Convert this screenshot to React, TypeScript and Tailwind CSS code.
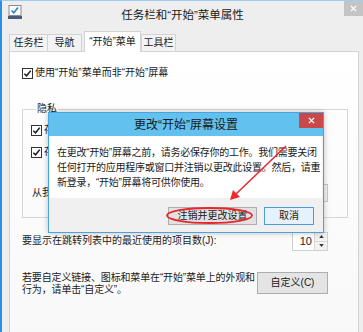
import React from "react";

const font = { fontFamily: '"Liberation Sans", "Noto Sans CJK SC", sans-serif' };

function CheckBox() {
  return (
    <span className="flex h-[11px] w-[11px] shrink-0 items-center justify-center border border-[#333333] bg-white">
      <svg viewBox="0 0 10 10" className="h-[9px] w-[9px]">
        <path d="M1.5 5.2 L4 7.6 L8.6 1.8" stroke="#1a1a1a" strokeWidth="1.7" fill="none" />
      </svg>
    </span>
  );
}

function Tab({ label, active, w }: { label: string; active?: boolean; w: string }) {
  return (
    <div
      className={
        active
          ? `relative z-10 -mb-px flex h-[21px] items-center justify-center border border-b-0 border-[#d3d3d3] bg-white ${w}`
          : `flex h-[17px] items-center justify-center border border-b-0 border-[#d3d3d3] bg-[#f3f3f3] ${w}`
      }
    >
      {label}
    </div>
  );
}

export default function App() {
  return (
    <div
      style={font}
      className="relative h-[332px] w-[363px] overflow-hidden border-l-2 border-t border-l-[#2b8fe6] border-t-[#9fcdef] bg-[#eeeeee] text-[10px] leading-[12px] text-[#1a1a1a]"
    >
      {/* title bar */}
      <div className="relative flex h-[27px] items-center justify-center">
        <svg viewBox="0 0 14 14" className="absolute left-[6px] top-[4px] h-[14px] w-[14px]">
          <rect x="1" y="0.5" width="12" height="10" fill="#ffffff" stroke="#8a8a8a" />
          <path d="M3.5 5.5 L5.8 7.8 L10 2.5" stroke="#2a7fd8" strokeWidth="1.6" fill="none" />
          <rect x="0" y="11" width="14" height="3" fill="#4a5a78" />
        </svg>
        <span className="text-[11.5px]">任务栏和“开始”菜单属性</span>
        <div className="absolute right-[0px] top-[-1px] flex h-[16px] w-[19px] items-center justify-center bg-[#c4c4c4]">
          <svg viewBox="0 0 8 8" className="h-[7px] w-[7px]">
            <path d="M1 1 L7 7 M7 1 L1 7" stroke="#ffffff" strokeWidth="1.5" />
          </svg>
        </div>
      </div>

      {/* tabs */}
      <div className="mt-[3px] flex items-end pl-[7px]">
        <Tab label="任务栏" w="w-[39px]" />
        <Tab label="导航" w="w-[35px] ml-[-1px]" />
        <div className="w-[2px]" />
        <Tab label="“开始”菜单" active w="w-[57px]" />
        <Tab label="工具栏" w="w-[35px]" />
      </div>

      {/* tab panel */}
      <div className="ml-[7px] mr-[4px] h-[300px] border border-[#d3d3d3] bg-gradient-to-b from-white to-[#f8f8f8] pl-[12px] pr-[10px] pt-[15px]">
        <div className="flex h-[12px] items-center gap-[1px]">
          <CheckBox />
          <span className="ml-[1px]">使用“开始”菜单而非“开始”屏幕</span>
        </div>

        <fieldset className="mt-[24px] border border-[#d6d6d6] pb-[15px] pl-[8px] pr-[19px]">
          <legend className="ml-[5px] px-[1px] leading-[12px]">隐私</legend>
          <div className="mt-[9px] flex h-[12px] items-center gap-[2px] whitespace-nowrap">
            <CheckBox />
            <span>存储并显示最近在“开始”菜单中打开的程序</span>
          </div>
          <div className="mt-[10px] flex h-[12px] items-center gap-[2px] whitespace-nowrap">
            <CheckBox />
            <span>存储并显示最近在“开始”菜单和任务栏中打开的项目</span>
          </div>
          <div className="mt-[26px] flex h-[18px] items-center gap-[8px] whitespace-nowrap pl-[1px]">
            <span>从我的“开始”菜单中</span>
            <div className="h-[18px] flex-1 border border-[#c8c8c8] bg-[#f4f4f4]" />
          </div>
        </fieldset>

        <div className="mr-[20px] mt-[14px] flex h-[18px] items-center justify-between">
          <span className="whitespace-nowrap">要显示在跳转列表中的最近使用的项目数(J):</span>
          <div className="flex h-[19px] w-[36px] border border-[#cfcfcf] bg-white">
            <span className="flex flex-1 items-center justify-end pr-[2px] text-[11px]">10</span>
            <div className="flex w-[13px] flex-col border-l border-[#d8d8d8]">
              <div className="flex flex-1 items-center justify-center border-b border-[#d8d8d8] bg-[#f2f2f2]">
                <svg viewBox="0 0 6 4" className="h-[3px] w-[5px]">
                  <path d="M0 4 L3 0 L6 4 Z" fill="#333333" />
                </svg>
              </div>
              <div className="flex flex-1 items-center justify-center bg-[#f2f2f2]">
                <svg viewBox="0 0 6 4" className="h-[3px] w-[5px]">
                  <path d="M0 0 L3 4 L6 0 Z" fill="#333333" />
                </svg>
              </div>
            </div>
          </div>
        </div>

        <div className="mr-[20px] mt-[22px] flex items-start justify-between">
          <div className="whitespace-nowrap leading-[12px] tracking-[-0.15px]">
            <div>若要自定义链接、图标和菜单在“开始”菜单上的外观和</div>
            <div>行为，请单击“自定义”。</div>
          </div>
          <button className="flex h-[22px] w-[71px] shrink-0 items-center justify-center border border-[#adadad] bg-[#e4e4e4]">
            自定义(C)
          </button>
        </div>
      </div>

      {/* modal dialog */}
      <div className="absolute left-[46px] top-[111px] flex h-[121px] w-[276px] flex-col border border-[#4aa3dc] bg-[#f0f0f0] shadow-[0_0_6px_rgba(0,0,0,0.25)]">
        <div className="relative flex h-[23px] items-center justify-center bg-[#62c1ef] text-[12px]">
          更改“开始”屏幕设置
          <div className="absolute right-0 top-0 flex h-[15px] w-[24px] items-center justify-center bg-[#c9484a]">
            <svg viewBox="0 0 8 8" className="h-[7px] w-[7px]">
              <path d="M1 1 L7 7 M7 1 L1 7" stroke="#ffffff" strokeWidth="1.5" />
            </svg>
          </div>
        </div>
        <div className="mx-[1px] h-[62px] whitespace-nowrap bg-white pl-[7px] pt-[9px] leading-[15px] tracking-[-0.25px]">
          <div>在更改“开始”屏幕之前，请务必保存你的工作。我们需要关闭</div>
          <div>任何打开的应用程序或窗口并注销以更改此设置。然后，请重</div>
          <div>新登录，“开始”屏幕将可供你使用。</div>
        </div>
        <div className="flex justify-end gap-[7px] pr-[9px] pt-[9px]">
          <button className="flex h-[18px] w-[89px] items-center justify-center border border-[#adadad] bg-[#e1e1e1]">
            注销并更改设置
          </button>
          <button className="flex h-[18px] w-[50px] items-center justify-center border border-[#4c9be0] bg-[#e5f1fb]">
            取消
          </button>
        </div>
      </div>

      {/* red annotation */}
      <svg className="pointer-events-none absolute left-[-2px] top-[-1px] h-[332px] w-[363px]" viewBox="0 0 363 332">
        <ellipse cx="209.5" cy="215.5" rx="42.5" ry="7.5" fill="none" stroke="#e8262b" strokeWidth="1.8" />
        <line x1="286" y1="146" x2="236" y2="194" stroke="#ea2b2f" strokeWidth="1.6" />
        <path d="M230 200 L233 190 L240 197 Z" fill="#ea2b2f" />
      </svg>
    </div>
  );
}
